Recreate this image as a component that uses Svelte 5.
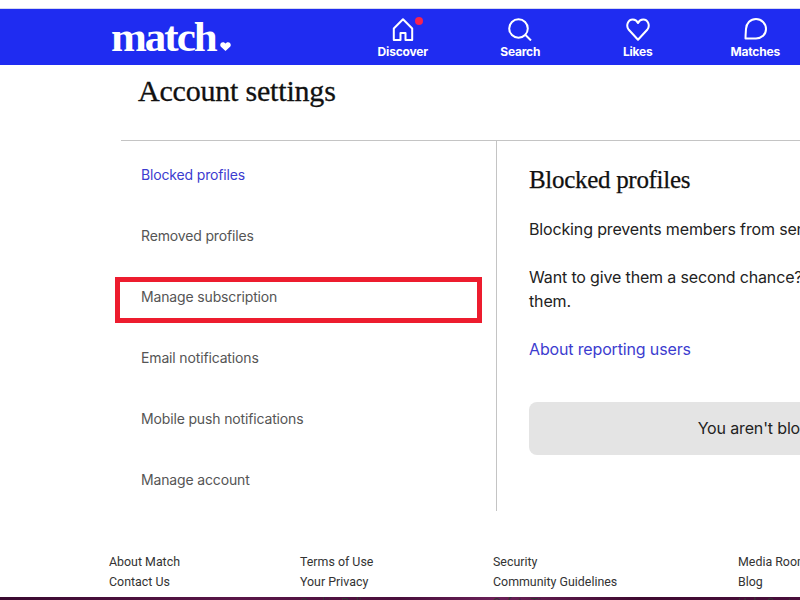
<script>
	const navItems = ["Discover", "Search", "Likes", "Matches"];
	const sideItems = [
		"Blocked profiles",
		"Removed profiles",
		"Manage subscription",
		"Email notifications",
		"Mobile push notifications",
		"Manage account"
	];
	const footerCols = [
		{ width: 191, links: ["About Match", "Contact Us"] },
		{ width: 193, links: ["Terms of Use", "Your Privacy", "Cookie Policy"] },
		{ width: 245, links: ["Security", "Community Guidelines", "Safety Tips"] },
		{ width: 120, links: ["Media Room", "Blog", "Help Center"] }
	];
</script>

<div class="page">
	<header>
		<div class="logo">match<svg class="logo-heart" viewBox="0 0 12 10" width="11" height="9"><path d="M6 10 L0.9 5.2 C-0.8 3.2 0.6 0.3 3.2 0.3 C4.4 0.3 5.4 0.9 6 1.9 C6.6 0.9 7.6 0.3 8.8 0.3 C11.4 0.3 12.8 3.2 11.1 5.2 Z" fill="#fff" /></svg></div>
		<nav>
			{#each navItems as item, i}
				<div class="nav-item">
					<div class="icon">
						{#if i === 0}
							<svg viewBox="0 0 24 24" width="24" height="24"><path d="M2.8 11.5 L12 2.2 L21.2 11.5 V23 H14.5 V16 H9.5 V23 H2.8 Z" /></svg>
							<span class="dot"></span>
						{:else if i === 1}
							<svg viewBox="0 0 24 24" width="24" height="24"><circle cx="10.5" cy="11.5" r="9.3" /><path d="M17.5 18 L23 23.5" /></svg>
						{:else if i === 2}
							<svg viewBox="0 0 24 24" width="24" height="24"><path d="M12 22.8 L2.8 12.8 C-0.4 8.8 1.8 2.6 6.8 2.6 C9.2 2.6 11 4 12 6 C13 4 14.8 2.6 17.2 2.6 C22.2 2.6 24.4 8.8 21.2 12.8 Z" /></svg>
						{:else}
							<svg viewBox="0 0 24 24" width="24" height="24"><path d="M2.5 21.5 C2.5 18 2.8 15 3 12 C3.3 6.2 7.5 2 13 2 C18.5 2 23 6.5 23 12 C23 17.5 18.5 21.5 13 21.5 Z" /></svg>
						{/if}
					</div>
					<span>{item}</span>
				</div>
			{/each}
		</nav>
	</header>

	<main>
		<h1>Account settings</h1>
		<div class="columns">
			<ul class="side">
				{#each sideItems as item, i}
					<li class:active={i === 0}>
						{item}
						{#if i === 2}<div class="highlight"></div>{/if}
					</li>
				{/each}
			</ul>
			<section>
				<h2>Blocked profiles</h2>
				<p>Blocking prevents members from sending you messages or viewing your profile.</p>
				<p>Want to give them a second chance? Unblock them so you can see and message them.</p>
				<a href="#about">About reporting users</a>
				<div class="empty">You aren't blocking anyone right now.</div>
			</section>
		</div>
	</main>

	<div class="band"></div>
	<footer>
		{#each footerCols as col}
			<div class="foot-col" style="width: {col.width}px">
				{#each col.links as link}
					<div>{link}</div>
				{/each}
			</div>
		{/each}
	</footer>
</div>

<style>
	:global(body) {
		background: #fff;
		overflow: hidden;
	}
	.page {
		position: relative;
		width: 800px;
		height: 600px;
		overflow: hidden;
		font-family: Inter, "Liberation Sans", sans-serif;
		box-sizing: border-box;
		padding-top: 9px;
	}
	header {
		height: 56px;
		background: #1f2cf1;
		border-top: 1px solid #d5d8f0;
		margin-top: -1px;
		display: flex;
		align-items: flex-start;
		padding-left: 111px;
		color: #fff;
	}
	.logo {
		width: 233px;
		flex: none;
		padding-top: 6px;
		font-family: "Liberation Serif", serif;
		font-size: 43px;
		font-weight: 700;
		letter-spacing: -2px;
		line-height: 1;
	}
	.logo-heart {
		margin-left: 4px;
	}
	nav {
		display: flex;
		flex: none;
	}
	.nav-item {
		width: 117.5px;
		flex: none;
		display: flex;
		flex-direction: column;
		align-items: center;
		padding-top: 8px;
		font-size: 12px;
		font-weight: 700;
		letter-spacing: -0.2px;
		line-height: 14px;
	}
	.icon {
		position: relative;
		width: 24px;
		height: 24px;
		margin-bottom: 4px;
	}
	.icon svg {
		display: block;
		fill: none;
		stroke: #fff;
		stroke-width: 2;
		stroke-linejoin: round;
	}
	.dot {
		position: absolute;
		top: 0;
		right: -8px;
		width: 8px;
		height: 8px;
		border-radius: 50%;
		background: #f5234f;
	}
	main {
		padding-left: 121px;
		width: 1100px;
	}
	h1 {
		margin: 0;
		padding: 8px 0 0 17px;
		height: 67px;
		border-bottom: 1px solid #c4c4c4;
		font-family: "Liberation Serif", serif;
		font-size: 30px;
		font-weight: 400;
		letter-spacing: -0.2px;
		line-height: 36px;
		color: #111;
		-webkit-text-stroke: 0.3px #111;
	}
	.columns {
		display: flex;
		height: 370px;
	}
	.side {
		list-style: none;
		margin: 0;
		padding: 3px 0 0 20px;
		width: 355px;
		border-right: 1px solid #c4c4c4;
		flex: none;
	}
	.side li {
		position: relative;
		height: 61px;
		line-height: 61px;
		font-size: 14px;
		letter-spacing: -0.15px;
		color: #555;
	}
	.side li.active {
		color: #3c3ccf;
	}
	.highlight {
		position: absolute;
		left: -26px;
		top: 11px;
		width: 367px;
		height: 46px;
		border: 5px solid #ed1c2e;
		box-sizing: border-box;
	}
	section {
		padding-left: 32px;
		width: 616px;
		flex: none;
		font-size: 16px;
		letter-spacing: -0.15px;
		line-height: 24px;
		color: #222;
	}
	h2 {
		margin: 24px 0 22px;
		font-family: "Liberation Serif", serif;
		font-size: 25px;
		font-weight: 400;
		letter-spacing: -0.3px;
		line-height: 30px;
		color: #111;
		-webkit-text-stroke: 0.25px #111;
	}
	p {
		margin: 0 0 24px;
	}
	a {
		display: block;
		color: #3c3ccf;
		text-decoration: none;
	}
	.empty {
		margin-top: 41px;
		height: 53px;
		line-height: 53px;
		background: #e4e4e4;
		border-radius: 8px;
		text-align: center;
	}
	footer {
		position: relative;
		display: flex;
		padding: 41px 0 0 109px;
		font-family: Roboto, "Liberation Sans", sans-serif;
		font-size: 12.4px;
		line-height: 20px;
		color: #333;
	}
	.foot-col {
		flex: none;
	}
	.foot-col div:nth-child(3) {
		margin-top: 1px;
	}
	.band {
		position: absolute;
		left: 0;
		right: 0;
		bottom: 0;
		height: 3px;
		background: linear-gradient(90deg, #3a0a30, #5a1648 30%, #4a0f3c 50%, #6a2058 62%, #3f0a30 80%, #4a0f3c);
	}
</style>
